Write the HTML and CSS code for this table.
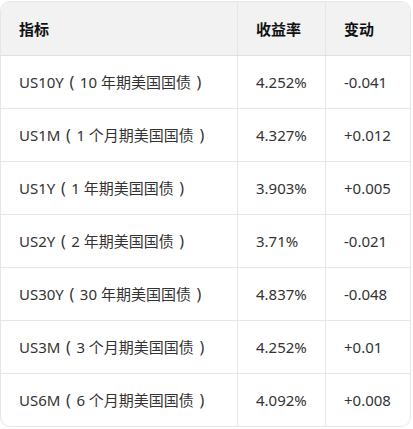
FILE: index.html
```html
<!DOCTYPE html>
<html lang="zh">
<head>
<meta charset="utf-8">
<link rel="stylesheet" href="styles.css">
</head>
<body>
<div class="wrap">
<table class="tbl">
<thead>
<tr><th class="c1">指标</th><th class="c2">收益率</th><th class="c3">变动</th></tr>
</thead>
<tbody>
<tr><td>US10Y<span class="pa">(</span>10 年期美国国债<span class="pa">)</span></td><td>4.252%</td><td>-0.041</td></tr>
<tr><td>US1M<span class="pa">(</span>1 个月期美国国债<span class="pa">)</span></td><td>4.327%</td><td>+0.012</td></tr>
<tr><td>US1Y<span class="pa">(</span>1 年期美国国债<span class="pa">)</span></td><td>3.903%</td><td>+0.005</td></tr>
<tr><td>US2Y<span class="pa">(</span>2 年期美国国债<span class="pa">)</span></td><td>3.71%</td><td>-0.021</td></tr>
<tr><td>US30Y<span class="pa">(</span>30 年期美国国债<span class="pa">)</span></td><td>4.837%</td><td>-0.048</td></tr>
<tr><td>US3M<span class="pa">(</span>3 个月期美国国债<span class="pa">)</span></td><td>4.252%</td><td>+0.01</td></tr>
<tr><td>US6M<span class="pa">(</span>6 个月期美国国债<span class="pa">)</span></td><td>4.092%</td><td>+0.008</td></tr>
</tbody>
</table>
</div>
</body>
</html>
```
FILE: styles.css
```css
html, body {
  margin: 0;
  padding: 0;
  background: #ffffff;
}
body {
  padding-top: 1px;
  font-family: "Noto Sans", "Noto Sans CJK SC", sans-serif;
  color: #333333;
}
.wrap {
  width: 409px;
  border: 1px solid #e6e6e6;
  border-radius: 10px;
  overflow: hidden;
}
.tbl {
  width: 100%;
  border-collapse: collapse;
  table-layout: fixed;
}
.tbl th, .tbl td {
  text-align: left;
  padding: 0 0 0 18px;
  font-size: 15px;
  white-space: nowrap;
  border-left: 1px solid #e6e6e6;
}
.tbl th:first-child, .tbl td:first-child {
  border-left: none;
}
.tbl th {
  background: #f2f2f2;
  height: 53px;
  font-weight: bold;
  color: #111111;
  border-bottom: 1px solid #e0e0e0;
}
.tbl td {
  height: 52px;
  border-bottom: 1px solid #e6e6e6;
}
.tbl tbody tr:last-child td {
  border-bottom: none;
}
.pa {
  display: inline-block;
  width: 16px;
  text-align: center;
  font-size: 16px;
}
.c1 { width: 218px; }
.c2 { width: 69px; }
```
